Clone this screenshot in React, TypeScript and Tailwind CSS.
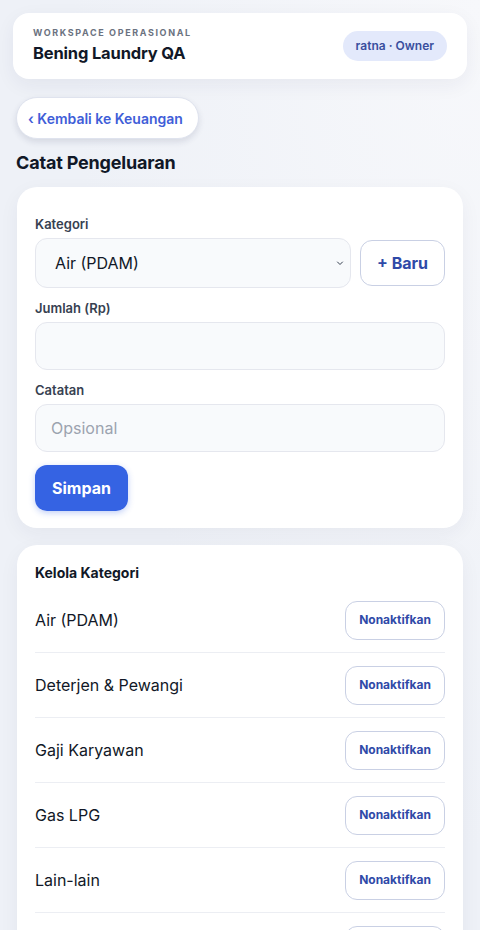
import React from 'react';

const categories = ['Air (PDAM)', 'Deterjen & Pewangi', 'Gaji Karyawan', 'Gas LPG', 'Lain-lain', 'Listrik'];

const App: React.FC = () => {
  return (
    <div
      className="min-h-[930px] bg-[radial-gradient(ellipse_at_top_right,#f7f8fb_0%,#eef1f7_60%)] px-4 pt-[13px] pb-6 text-[#111827]"
      style={{ fontFamily: 'Inter, "Noto Sans", sans-serif' }}
    >
      <div className="-mx-[3px] flex h-[66px] items-center justify-between rounded-2xl bg-white pl-5 pr-5 shadow-[0_6px_20px_rgba(30,41,80,0.06)]">
        <div>
          <p className="text-[9px] font-bold uppercase leading-3 tracking-[0.18em] text-[#6b7280]">Workspace Operasional</p>
          <h1 className="mt-[2px] text-[16.5px] font-bold leading-6 tracking-[-0.01em] text-[#111827]">Bening Laundry QA</h1>
        </div>
        <span className="rounded-full bg-[#e3e9fb] px-[13px] py-[7px] text-[12px] font-semibold leading-4 text-[#3a4f9e]">
          ratna · Owner
        </span>
      </div>

      <button className="mt-[18px] flex h-[42px] items-center rounded-full border border-[#dfe3ee] bg-white pl-[11px] pr-[15px] text-[14px] font-semibold text-[#3f5ed8] shadow-[0_3px_6px_rgba(30,41,80,0.12)]">
        ‹ Kembali ke Keuangan
      </button>

      <h2 className="mt-[10px] text-[18px] font-bold leading-7 tracking-[-0.01em] text-[#111827]">Catat Pengeluaran</h2>

      <div className="mt-[10px] ml-px mr-px rounded-[20px] bg-white px-[18px] pt-[28px] pb-[17px] shadow-[0_6px_20px_rgba(30,41,80,0.05)]">
        <label className="block text-[13px] font-semibold leading-[18px] text-[#374151]">Kategori</label>
        <div className="mt-[5px] flex gap-[9px]">
          <div className="relative flex h-[50px] flex-1 items-center rounded-xl border border-[#e5e7ee] bg-[#f8fafc] pl-[19px]">
            <span className="text-[16px] text-[#111827]">Air (PDAM)</span>
            <svg className="absolute right-[6px] top-1/2 -translate-y-1/2" width="8" height="8" viewBox="0 0 8 8" fill="none">
              <path d="M1.5 3l2.5 2.5L6.5 3" stroke="#374151" strokeWidth="1" strokeLinecap="round" />
            </svg>
          </div>
          <button className="mt-[2px] h-[46px] w-[85px] rounded-xl border border-[#c9d0e4] bg-white text-[16px] font-bold text-[#2f4aa8]">
            + Baru
          </button>
        </div>

        <label className="mt-[11px] block text-[13px] font-semibold leading-[18px] text-[#374151]">Jumlah (Rp)</label>
        <div className="mt-[5px] h-[48px] rounded-xl border border-[#e5e7ee] bg-[#f8fafc]" />

        <label className="mt-[11px] block text-[13px] font-semibold leading-[18px] text-[#374151]">Catatan</label>
        <div className="mt-[5px] flex h-[48px] items-center rounded-xl border border-[#e5e7ee] bg-[#f8fafc] pl-[15px]">
          <span className="text-[16px] text-[#9ca3af]">Opsional</span>
        </div>

        <button className="mt-[13px] h-[46px] w-[93px] rounded-xl bg-[#3563e3] text-[16px] font-bold text-white shadow-[0_2px_6px_rgba(53,99,227,0.3)]">
          Simpan
        </button>
      </div>

      <div className="mt-[17px] ml-px mr-px rounded-[20px] bg-white px-[18px] pt-[19px] shadow-[0_6px_20px_rgba(30,41,80,0.05)]">
        <h3 className="text-[14px] font-bold leading-[18px] text-[#111827]">Kelola Kategori</h3>
        <div className="mt-[6px]">
          {categories.map((c) => (
            <div key={c} className="flex h-[65px] items-center justify-between border-b border-[#eceef3]">
              <span className="text-[16px] text-[#111827]">{c}</span>
              <button className="h-[39px] w-[100px] rounded-xl border border-[#c9d0e4] bg-white text-[12px] font-bold text-[#2f4aa8]">
                Nonaktifkan
              </button>
            </div>
          ))}
        </div>
      </div>
    </div>
  );
};

export default App;
